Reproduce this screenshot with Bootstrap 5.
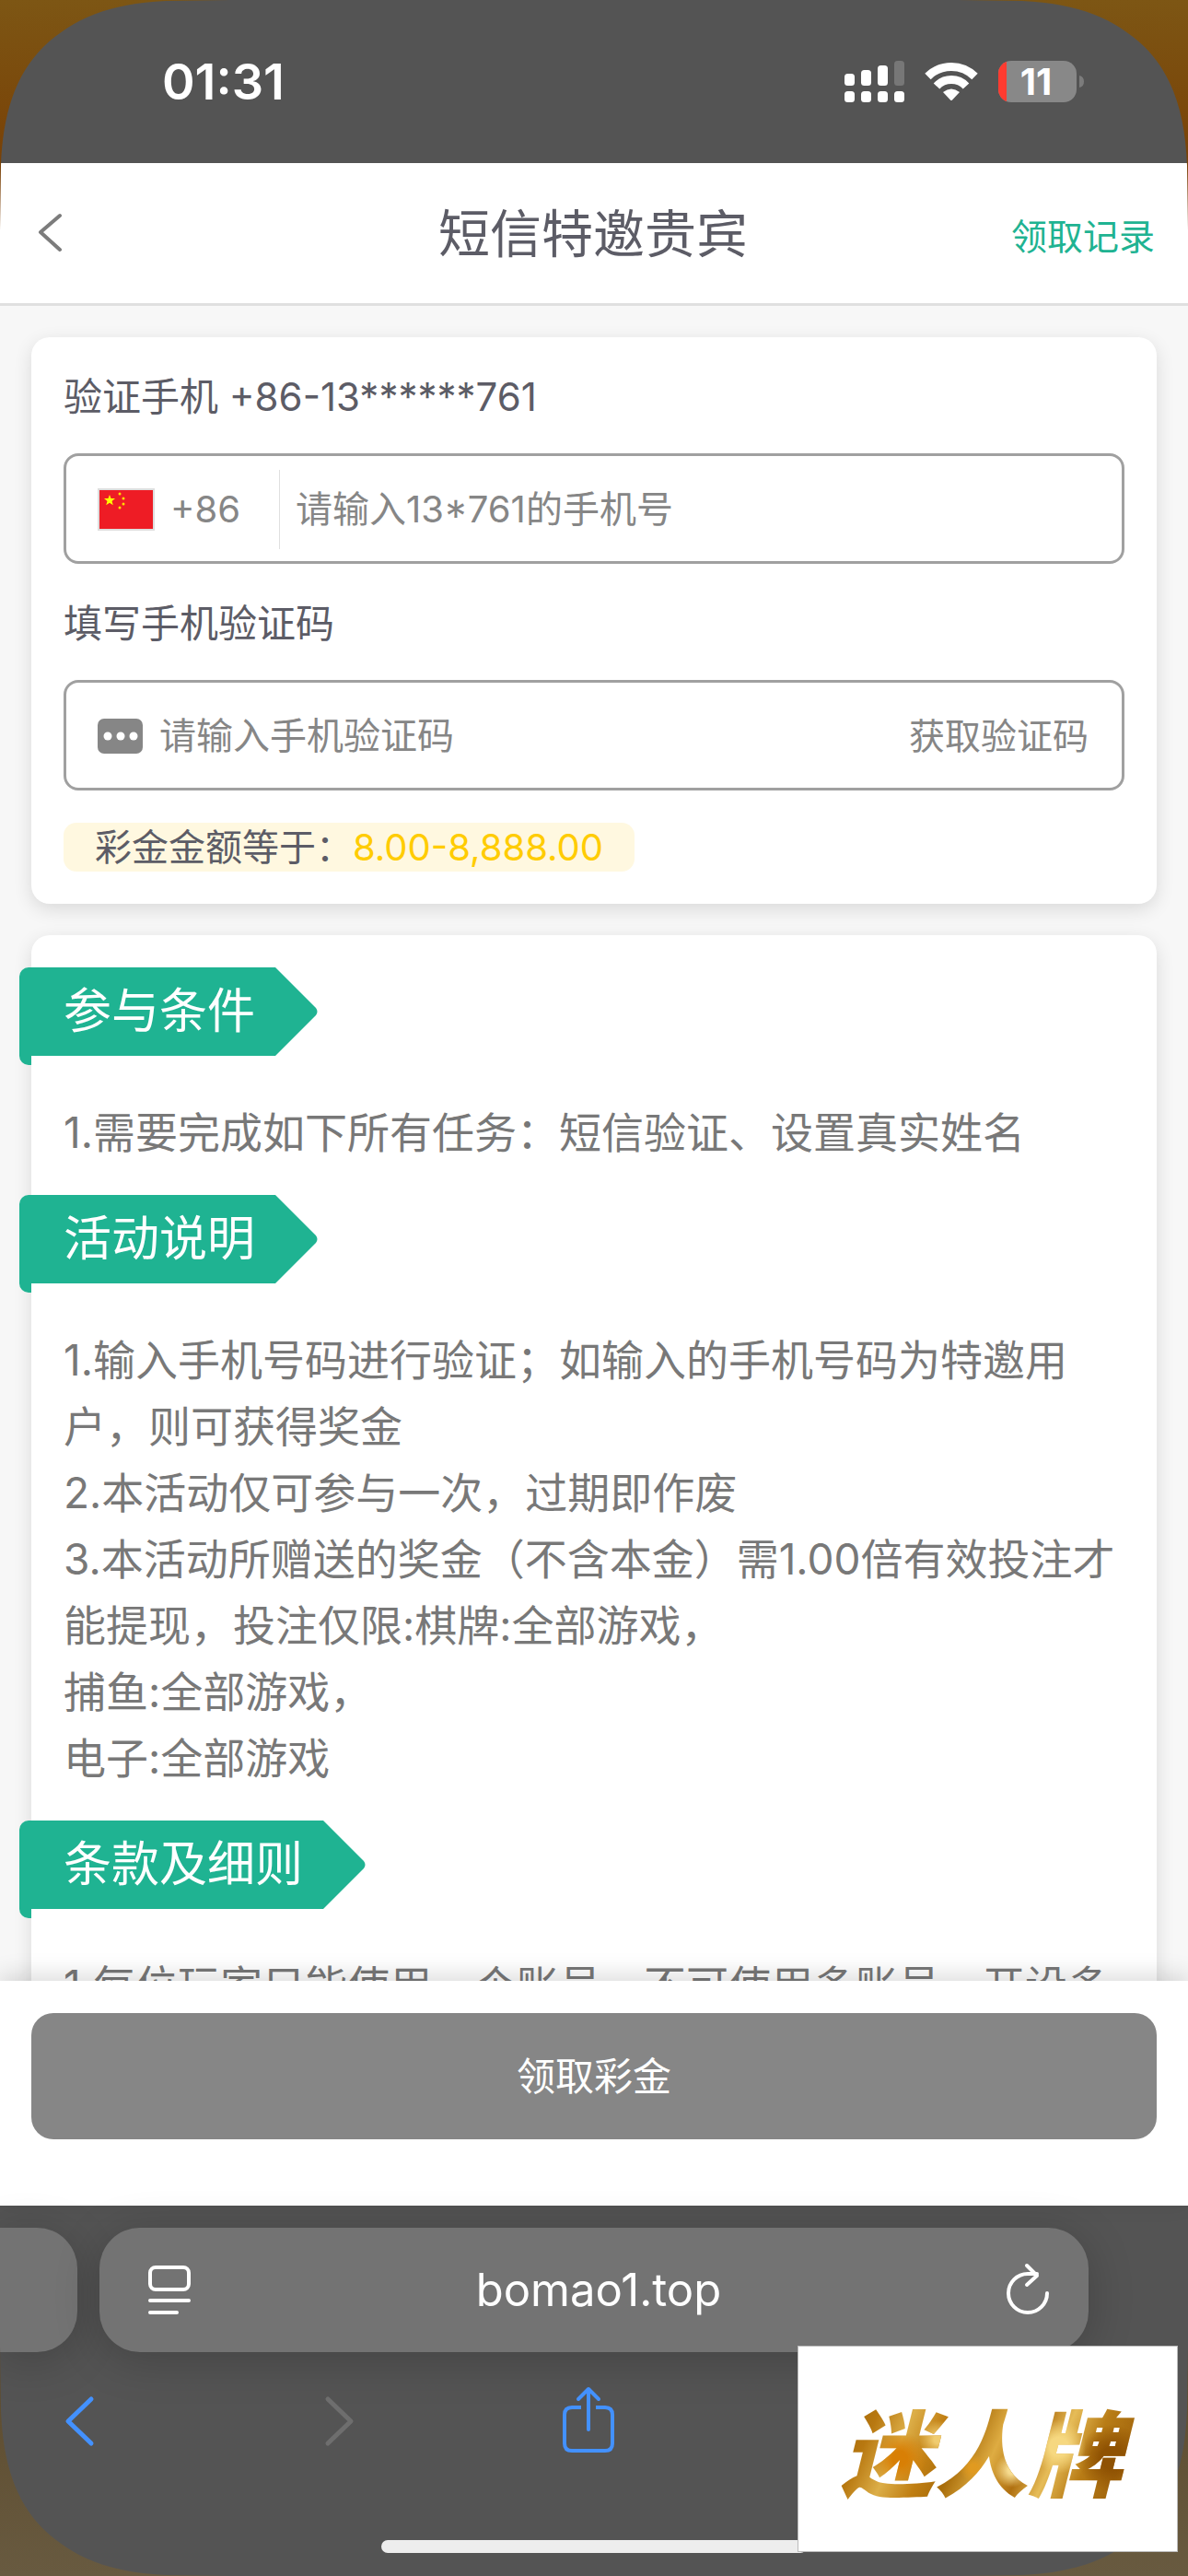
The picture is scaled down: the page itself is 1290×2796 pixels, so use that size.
<!DOCTYPE html>
<html lang="zh-CN">
<head>
<meta charset="utf-8">
<meta name="viewport" content="width=device-width, initial-scale=1">
<title>短信特邀贵宾</title>
<link href="https://cdn.jsdelivr.net/npm/bootstrap@5.3.0/dist/css/bootstrap.min.css" rel="stylesheet">
<style>
:root{--green:#1fb392;--ink:#5c5c66;--gray:#868686}
body{font-family:Inter,"Noto Sans CJK SC",sans-serif;font-size:46px;line-height:72px;color:#787878;background:#545454}
svg{display:block;flex:none;overflow:visible}
.screen{background:#545454}
.corner{position:absolute;width:250px;height:250px;pointer-events:none;z-index:5}
.c-tl{top:0;left:0}
.c-tr{top:0;right:0;transform:scaleX(-1)}
.c-bl{bottom:0;left:0;transform:scaleY(-1)}
.c-br{bottom:0;right:0;transform:scale(-1)}
.status{height:177px;padding:0 113px 0 176px;color:#fff}
.status-icons{gap:22px}
.clock{font-size:54px;font-weight:600}
.page-head{height:155px;border-bottom:3px solid #e0e0e0;padding:4px 36px 0 34px}
.page-title{font-size:56px;color:var(--ink);font-weight:400}
.side{flex:1 1 0}
.side svg{margin:0}
.record{font-size:39px;color:var(--green);text-decoration:none}
.page-main{background:#f7f7f7;padding:34px 34px 0;min-height:0}
.panel{background:#fff;border-radius:20px;box-shadow:0 6px 20px rgba(0,0,0,.12)}
.panel-form{padding:32px 35px 35px}
.panel-rules{padding:35px 35px 48px;margin-top:34px}
.field-label{font-size:42px;line-height:66px;color:var(--ink)}
.field{height:120px;border:3px solid #a0a0a0;border-radius:16px;padding:2px 36px 0 34px;margin:28px 0 32px;color:var(--gray);font-size:40px;background:#fff}
.field-last{margin-bottom:35px}
.field input{border:0;outline:0;background:none;font-size:40px;color:var(--gray);min-width:0;padding:0}
.field input::placeholder{color:var(--gray);opacity:1}
.field .btn{font-size:39px;color:var(--gray);padding:0;border:0}
.split{width:1px;height:86px;background:#e0e0e0;margin:0 17px 0 42px}
.prefix{margin-left:17px}
.code-input{margin-left:18px}
.bonus{background:#fff8e0;border-radius:14px;font-size:40px;line-height:53px;padding:0 34px;color:var(--ink)}
.bonus-sum{color:#fc0}
.ribbon{position:relative;height:96px;margin-left:-48px;padding:0 22px 0 48px;background:var(--green);border-top-left-radius:10px;color:#fff;font-size:52px;font-weight:400;line-height:96px;width:max-content}
.ribbon::before{content:"";position:absolute;left:0;top:80px;width:13px;height:26px;background:var(--green);border-radius:0 0 0 10px}
.ribbon svg{position:absolute;left:100%;top:0}
.rule-text{margin:47px 0 32px}
.claim-bar{background:#fff;padding:35px 34px 72px;box-shadow:0 -6px 24px rgba(0,0,0,.14);position:relative}
.claim{height:137px;border-radius:24px;background:var(--gray);color:#fff;font-size:42px;border:0}
.claim:hover{background:var(--gray);color:#fff}
.browser{height:402px;padding-top:24px;position:relative}
.pill{height:135px;background:#737373;box-shadow:0 8px 50px rgba(0,0,0,.2)}
.pill-prev{width:84px;border-radius:0 44px 44px 0}
.pill-url{border-radius:44px;margin:0 108px 0 24px;padding:0 43px 0 53px;color:#fff;font-size:49px}
.tools{height:110px;margin:20px 0 0;padding:0 70px}
.tools a{display:block}
.tool-fwd{margin-left:251px}
.tool-share{margin-left:226px}
.home-bar{width:462px;height:14px;border-radius:7px;background:#ededed;margin:74px auto 0}
.stamp{position:absolute;right:11px;bottom:26px;width:413px;height:224px;background:#fff;border:1px solid #bbb;z-index:6}
.gold{font-family:"Noto Sans CJK SC",sans-serif;font-size:102px;font-weight:900;font-style:italic;line-height:130px;padding:0 14px 0 0;color:transparent;background:
 radial-gradient(circle at 33% 42%,#f0cc70 0 2%,transparent 9%),
 radial-gradient(circle at 58% 68%,#f6dc90 0 2%,transparent 9%),
 radial-gradient(circle at 20% 58%,#d87f05 0 3%,transparent 11%),
 radial-gradient(circle at 45% 66%,#e09a20 0 2%,transparent 8%),
 radial-gradient(circle at 74% 48%,#f6d880 0 4%,transparent 12%),
 radial-gradient(circle at 92% 58%,#8f5203 0 4%,transparent 12%),
 linear-gradient(115deg,#96600a 0,#b87810 14%,#dcae48 24%,#c07e12 34%,#a86c0a 42%,#deac42 52%,#b07010 62%,#e6bc58 70%,#b87c16 80%,#a4680e 90%,#cc9830 100%);-webkit-background-clip:text;background-clip:text}
</style>
<script src="https://cdn.jsdelivr.net/npm/bootstrap@5.3.0/dist/js/bootstrap.bundle.min.js"></script>
</head>
<body>
<svg width="0" height="0" class="position-absolute" aria-hidden="true">
  <defs>
    <linearGradient id="warm" x1="0" y1="0" x2="0" y2="1"><stop offset="0" stop-color="#7d5614"/><stop offset="1" stop-color="#773800"/></linearGradient>
    <linearGradient id="dusk" x1="0" y1="0" x2="0" y2="1"><stop offset="0" stop-color="#685a40"/><stop offset="1" stop-color="#5c4a2c"/></linearGradient>
    <path id="cut" d="M0 0H250L180 1C118 4 80 20 47 51C16 82 3 125 1 180L0 250Z"/>
  </defs>
</svg>
<div class="screen position-relative vh-100 d-flex flex-column overflow-hidden">
  <svg class="corner c-tl" viewBox="0 0 250 250" aria-hidden="true"><use href="#cut" fill="url(#warm)"/></svg>
  <svg class="corner c-tr" viewBox="0 0 250 250" aria-hidden="true"><use href="#cut" fill="url(#warm)"/></svg>
  <svg class="corner c-bl" viewBox="0 0 250 250" aria-hidden="true"><use href="#cut" fill="url(#dusk)"/></svg>
  <svg class="corner c-br" viewBox="0 0 250 250" aria-hidden="true"><use href="#cut" fill="url(#dusk)"/></svg>

  <div class="status d-flex align-items-center justify-content-between flex-shrink-0">
    <span class="clock">01:31</span>
    <div class="status-icons d-flex align-items-center">
      <svg width="65" height="45" viewBox="0 0 65 45" fill="#fff" aria-hidden="true">
        <rect y="14" width="11" height="13" rx="3.500"/><rect x="18" y="10" width="11" height="17" rx="3.500"/><rect x="36" y="5" width="11" height="22" rx="3.500"/><rect x="54" width="11" height="27" rx="3.500" fill="#777"/>
        <rect y="33" width="11" height="12" rx="3.500"/><rect x="18" y="33" width="11" height="12" rx="3.500"/><rect x="36" y="33" width="11" height="12" rx="3.500"/><rect x="54" y="33" width="11" height="12" rx="3.500"/>
      </svg>
      <svg width="58" height="45" viewBox="0 0 58 45" fill="none" stroke="#fff" stroke-width="9" aria-hidden="true">
        <path d="M3.500 17A36 36 0 0 1 54.500 17M13 27.500A22 22 0 0 1 45 27.500"/><path d="M20 34Q29 27 38 34L30 42.500Q29 43.500 28 42.500Z" fill="#fff" stroke="none"/>
      </svg>
      <svg width="93" height="45" viewBox="0 0 93 45" aria-hidden="true">
        <clipPath id="cell"><rect width="85" height="45" rx="14"/></clipPath>
        <g clip-path="url(#cell)"><rect width="85" height="45" fill="#888"/><rect width="9" height="45" fill="#ff3b30"/></g>
        <path d="M88 16Q93 17 93 22.500T88 29Z" fill="#7c7c7c"/>
        <text x="41" y="37" text-anchor="middle" font-family="Inter" font-size="40" font-weight="700" fill="#fff">11</text>
      </svg>
    </div>
  </div>

  <header class="page-head bg-white d-flex align-items-center flex-shrink-0">
    <div class="side d-flex"><a href="#" aria-label="返回"><svg width="40" height="48" viewBox="0 0 40 48" fill="none" stroke="#7c7c7c" stroke-width="4" stroke-linecap="round" stroke-linejoin="round"><path d="M31 3L10 21L31 40"/></svg></a></div>
    <h1 class="page-title mb-0">短信特邀贵宾</h1>
    <div class="side text-end"><a href="#" class="record">领取记录</a></div>
  </header>

  <main class="page-main flex-grow-1 overflow-hidden">
    <form class="panel panel-form">
      <label for="phone" class="field-label d-block">验证手机 +86-13******761</label>
      <div class="field d-flex align-items-center">
        <svg width="62" height="46" viewBox="0 0 62 46" role="img" aria-label="中国">
          <rect width="62" height="46" fill="#dedede"/><rect x="2" y="2" width="58" height="42" fill="#ee1c25"/>
          <path fill="#ff0" d="M13 7l1.500 4H19l-3.500 3 1.300 4.300L13 15.700l-3.800 2.600 1.300-4.300L7 11h4.500z"/>
          <g fill="#fd0"><circle cx="24" cy="6" r="1.500"/><circle cx="28" cy="11" r="1.500"/><circle cx="28" cy="17" r="1.500"/><circle cx="24" cy="21" r="1.500"/></g>
        </svg>
        <span class="prefix">+86</span>
        <span class="split"></span>
        <input id="phone" type="tel" class="flex-grow-1" placeholder="请输入13*761的手机号">
      </div>
      <label for="code" class="field-label d-block">填写手机验证码</label>
      <div class="field field-last d-flex align-items-center">
        <svg width="49" height="38" viewBox="0 0 49 38" aria-hidden="true"><rect width="49" height="38" rx="7" fill="#868686"/><g fill="#fff"><circle cx="11" cy="19" r="4.500"/><circle cx="25" cy="19" r="4.500"/><circle cx="39" cy="19" r="4.500"/></g></svg>
        <input id="code" type="text" class="code-input flex-grow-1" placeholder="请输入手机验证码">
        <button type="button" class="btn">获取验证码</button>
      </div>
      <div class="d-flex"><div class="bonus">彩金金额等于：<span class="bonus-sum">8.00-8,888.00</span></div></div>
    </form>

    <section class="panel panel-rules">
      <h2 class="ribbon mb-0">参与条件<svg width="46" height="96" viewBox="0 0 46 96" fill="#1fb392" aria-hidden="true"><path d="M-1 0H0L44 44Q47 48 44 52L0 96H-1Z"/></svg></h2>
      <p class="rule-text">1.需要完成如下所有任务：短信验证、设置真实姓名</p>
      <h2 class="ribbon mb-0">活动说明<svg width="46" height="96" viewBox="0 0 46 96" fill="#1fb392" aria-hidden="true"><path d="M-1 0H0L44 44Q47 48 44 52L0 96H-1Z"/></svg></h2>
      <p class="rule-text">1.输入手机号码进行验证；如输入的手机号码为特邀用户，则可获得奖金<br>2.本活动仅可参与一次，过期即作废<br>3.本活动所赠送的奖金（不含本金）需1.00倍有效投注才能提现，投注仅限:棋牌:全部游戏，<br>捕鱼:全部游戏，<br>电子:全部游戏</p>
      <h2 class="ribbon mb-0">条款及细则<svg width="46" height="96" viewBox="0 0 46 96" fill="#1fb392" aria-hidden="true"><path d="M-1 0H0L44 44Q47 48 44 52L0 96H-1Z"/></svg></h2>
      <p class="rule-text">1.每位玩家只能使用一个账号，不可使用多账号，开设多</p>
    </section>
  </main>

  <div class="claim-bar flex-shrink-0"><button type="button" class="btn claim w-100">领取彩金</button></div>

  <footer class="browser flex-shrink-0">
    <div class="d-flex">
      <div class="pill pill-prev"></div>
      <div class="pill pill-url flex-grow-1 d-flex align-items-center justify-content-between">
        <svg width="46" height="54" viewBox="0 0 46 54" fill="none" stroke="#fff" stroke-width="4" stroke-linecap="round" aria-hidden="true"><rect x="2" y="2" width="42" height="24" rx="6"/><path d="M2 38H44M2 51H31"/></svg>
        <span>bomao1.top</span>
        <a href="#" aria-label="刷新"><svg width="46" height="54" viewBox="0 0 46 54" fill="none" stroke="#fff" stroke-width="4" stroke-linecap="round" stroke-linejoin="round"><path d="M44 30A21 21 0 1 1 23 9H33M22 0L33 11L22 21"/></svg></a>
      </div>
    </div>
    <nav class="tools d-flex align-items-center">
      <a href="#" aria-label="后退"><svg width="32" height="54" viewBox="0 0 32 54" fill="none" stroke="#4391ff" stroke-width="5" stroke-linecap="round" stroke-linejoin="round"><path d="M29 3L4 27L29 51"/></svg></a>
      <a href="#" aria-label="前进" class="tool-fwd"><svg width="32" height="54" viewBox="0 0 32 54" fill="none" stroke="#6e6e6e" stroke-width="5" stroke-linecap="round" stroke-linejoin="round"><path d="M3 3L28 27L3 51"/></svg></a>
      <a href="#" aria-label="分享" class="tool-share"><svg width="57" height="72" viewBox="0 0 57 72" fill="none" stroke="#4391ff" stroke-width="4" stroke-linecap="round" stroke-linejoin="round"><path d="M28 45V2M17 12L28 1L39 12"/><path stroke-linecap="butt" d="M20 21H10Q2 21 2 29V60Q2 68 10 68H46Q54 68 54 60V29Q54 21 46 21H36"/></svg></a>
    </nav>
    <div class="home-bar"></div>
    <div class="stamp d-flex align-items-center justify-content-center"><span class="gold">迷人牌</span></div>
  </footer>
</div>
</body>
</html>
